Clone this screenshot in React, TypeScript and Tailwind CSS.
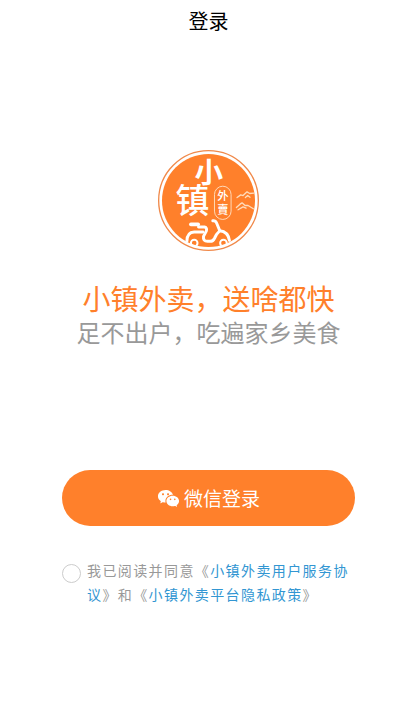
import React, { useState } from "react";
import { RiWechatFill } from "react-icons/ri";

function Logo() {
    return (
        <svg viewBox="25 28 304 304" className="w-[101px] h-[101px]" role="img" aria-label="小镇外卖">
            <defs>
                <clipPath id="disc">
                    <circle cx="177" cy="180" r="142" />
                </clipPath>
            </defs>
            <circle cx="177" cy="180" r="150" fill="#fff" stroke="#f0894a" strokeWidth="4" />
            <circle cx="177" cy="180" r="140" fill="#ff802b" />

            {/* lettering */}
            <g fill="#fff" textAnchor="middle" className="font-['Noto_Sans_CJK_SC',sans-serif]">
                <text x="178" y="127" fontSize="86" className="font-bold">小</text>
                <text x="129" y="217" fontSize="102" className="font-medium">镇</text>
                <text x="220" y="178" fontSize="34" className="font-medium">外</text>
                <text x="220" y="222" fontSize="34" className="font-medium">賣</text>
            </g>
            <rect x="195" y="137" width="50" height="100" rx="25" fill="none" stroke="#ffd9b8" strokeWidth="3" />

            {/* hills */}
            <g fill="none" stroke="#ffdcbc" strokeWidth="4" strokeLinecap="round" strokeLinejoin="round">
                <path d="M263 171 L274 163 L281 165 L293 154 L301 159 L313 158" />
                <path d="M288 171 L295 165 L302 170" />
                <path d="M261 201 L272 191 L278 187 L287 195 L296 195 L312 205" />
                <path d="M266 208 L281 199 L290 203" />
            </g>

            {/* scooter */}
            <g fill="none" stroke="#fff" strokeLinecap="round" strokeLinejoin="round" clipPath="url(#disc)">
                <path d="M124 252 H146" strokeWidth="11" />
                <path d="M147 260 H165 Q174 262 170 273 L162 288 Q160 303 174 303 H182 Q191 303 195 294 Q200 281 211 271" strokeWidth="9" />
                <path d="M112 303 Q112 276 134 275 H160" strokeWidth="9" />
                <path d="M190 241 Q198 240 201 247 L211 271 Q236 274 240 300" strokeWidth="9" />
                <circle cx="134" cy="308" r="10" strokeWidth="6" />
                <circle cx="222" cy="308" r="10" strokeWidth="6" />
            </g>
        </svg>
    );
}

export default function Login() {
    const [agreed, setAgreed] = useState(false);

    return (
        <div className="min-h-screen bg-white pl-[62px] pr-[60px] font-['Noto_Sans_CJK_SC',sans-serif]" lang="zh-CN">
            <header className="h-[42px] flex items-center justify-center">
                <h1 className="text-xl text-black">登录</h1>
            </header>

            <main className="pt-[108px] flex flex-col items-center">
                <Logo />

                <div className="mt-[30px] text-center whitespace-nowrap">
                    <h2 className="text-[28px] leading-[34px] text-[#ff802b]">小镇外卖，送啥都快</h2>
                    <p className="text-2xl leading-[34px] text-[#999999]">足不出户，吃遍家乡美食</p>
                </div>

                <button
                    type="button"
                    className="mt-[121px] w-full h-14 rounded-full bg-[#ff802b] text-white text-[19px] flex items-center justify-center gap-1"
                >
                    <RiWechatFill className="w-[23px] h-[23px]" />
                    微信登录
                </button>

                <div className="mt-8 w-full flex items-start gap-1.5">
                    <input
                        id="agree"
                        type="checkbox"
                        checked={agreed}
                        onChange={(e) => setAgreed(e.target.checked)}
                        className="mt-1.5 w-[19px] h-[19px] shrink-0 appearance-none rounded-full border border-[#cccccc] checked:border-[#ff802b] checked:bg-[#ff802b]"
                    />
                    <label htmlFor="agree" className="text-sm leading-6 tracking-widest text-[#999999]">
                        我已阅读并同意《<a href="#terms" className="text-[#3296d2]">小镇外卖用户服务协议</a>》和《<a href="#privacy" className="text-[#3296d2]">小镇外卖平台隐私政策</a>》
                    </label>
                </div>
            </main>
        </div>
    );
}
